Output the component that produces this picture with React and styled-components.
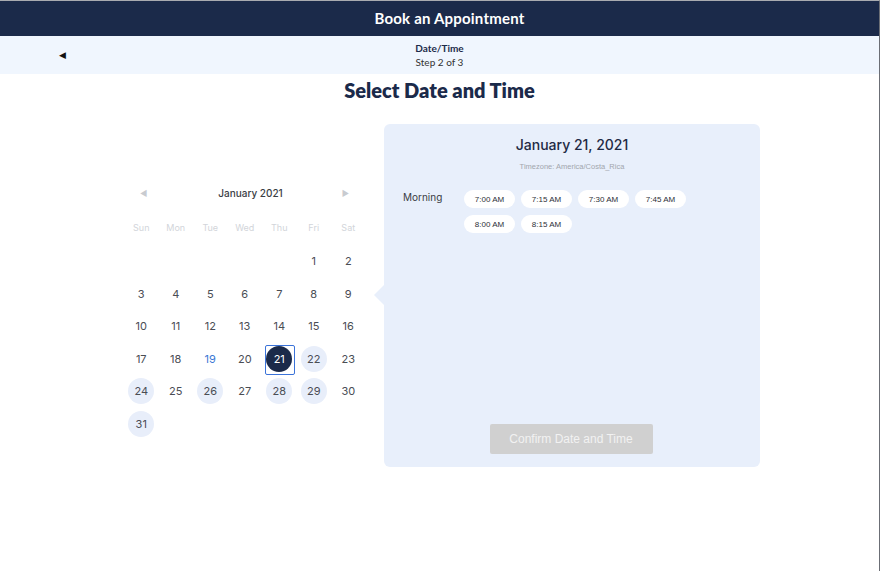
import React from "react";
import styled, { createGlobalStyle } from "styled-components";

const Global = createGlobalStyle`
  html, body { margin: 0; padding: 0; background: #fff; }
  body { font-family: "Lato", "Noto Sans", sans-serif; }
  * { box-sizing: border-box; }
`;

const Page = styled.div`
  width: 880px;
  height: 571px;
  border-top: 1px solid #a9abb0;
  border-right: 1px solid #6b6e75;
  background: #fff;
  display: flex;
  flex-direction: column;
`;

const TopBar = styled.header`
  height: 35px;
  background: #1b2a4a;
  color: #fff;
  display: flex;
  align-items: center;
  justify-content: center;
  padding: 0 0 1px 20px;
  font-family: "Lato", sans-serif;
  font-weight: 700;
  font-size: 15px;
  letter-spacing: 0.2px;
`;

const StepBar = styled.div`
  height: 38px;
  background: #f0f6fe;
  position: relative;
  display: flex;
  flex-direction: column;
  align-items: center;
  justify-content: center;
  gap: 2px;
  color: #1b2a4a;
  font-family: "Lato", sans-serif;
`;

const BackButton = styled.button`
  position: absolute;
  left: 59px;
  top: 50%;
  transform: translateY(-50%);
  background: none;
  border: none;
  padding: 0;
  font-size: 9px;
  color: #111;
  cursor: pointer;
  line-height: 1;
`;

const StepTitle = styled.div`
  font-size: 10px;
  font-weight: 700;
  line-height: 12px;
`;

const StepSub = styled.div`
  font-size: 10px;
  font-weight: 400;
  line-height: 12px;
  color: #333;
`;

const Heading = styled.h1`
  margin: 4px 0 0;
  text-align: center;
  font-family: "Lato", sans-serif;
  font-weight: 800;
  font-size: 20px;
  line-height: 24px;
  color: #1b2a4a;
`;

const Content = styled.div`
  display: flex;
  justify-content: center;
  align-items: flex-start;
  gap: 19px;
  margin-top: 22px;
  padding-left: 5px;
`;

const Calendar = styled.div`
  width: 241px;
  margin-top: 59px;
  font-family: "Inter", sans-serif;
`;

const CalHeader = styled.div`
  height: 20px;
  display: flex;
  align-items: center;
  justify-content: space-between;
  padding: 0 16px 0 16px;
`;

const NavArrow = styled.span`
  color: #c8cbd0;
  font-size: 8px;
  line-height: 1;
`;

const MonthLabel = styled.div`
  font-size: 10px;
  font-weight: 500;
  color: #3a3d44;
  margin-left: 12px;
`;

const Grid = styled.div`
  display: grid;
  grid-template-columns: repeat(7, 34.5px);
  grid-template-rows: 36px;
  grid-auto-rows: 32.5px;
  margin-top: 6px;
`;

const WeekDay = styled.div`
  display: flex;
  align-items: center;
  justify-content: center;
  font-size: 9px;
  color: #d2d5da;
  font-weight: 400;
`;

const DayCell = styled.div`
  display: flex;
  align-items: center;
  justify-content: center;
`;

const Day = styled.div`
  width: 26px;
  height: 26px;
  border-radius: 50%;
  display: flex;
  align-items: center;
  justify-content: center;
  font-size: 11px;
  position: relative;
  color: ${(p) => (p.$selected ? "#fff" : p.$today ? "#3a78d4" : "#4a4d54")};
  background: ${(p) =>
    p.$selected ? "#1b2a4a" : p.$available ? "#e8eefa" : "transparent"};
  ${(p) =>
    p.$selected &&
    `
    &::after {
      content: "";
      position: absolute;
      left: -1px;
      top: -1px;
      width: 28px;
      height: 28px;
      border: 1.5px solid #3b73d9;
      border-radius: 2px;
    }
  `}
`;

const Panel = styled.section`
  position: relative;
  width: 376px;
  height: 343px;
  background: #e8effb;
  border-radius: 6px;
  padding: 12px 19px 13px;
  display: flex;
  flex-direction: column;
  &::before {
    content: "";
    position: absolute;
    left: -10px;
    top: 161px;
    border-top: 10px solid transparent;
    border-bottom: 10px solid transparent;
    border-right: 10px solid #e8effb;
  }
`;

const PanelTitle = styled.h2`
  margin: 0;
  text-align: center;
  font-family: "Inter", sans-serif;
  font-weight: 500;
  font-size: 14px;
  line-height: 18px;
  color: #1f2a44;
`;

const Timezone = styled.div`
  margin-top: 8px;
  text-align: center;
  font-family: "Liberation Sans", sans-serif;
  font-size: 7.5px;
  color: #a2a6ad;
`;

const SlotRow = styled.div`
  display: flex;
  margin-top: 19px;
`;

const SlotLabel = styled.div`
  width: 61px;
  font-family: "Inter", sans-serif;
  font-size: 10px;
  color: #3a3d44;
  padding-top: 1px;
`;

const Slots = styled.div`
  width: 230px;
  display: flex;
  flex-wrap: wrap;
  column-gap: 6px;
  row-gap: 7px;
`;

const Slot = styled.button`
  width: 51px;
  height: 18px;
  border: none;
  border-radius: 9px;
  background: #fff;
  font-family: "Liberation Sans", sans-serif;
  font-size: 8px;
  color: #2d3038;
  padding: 0;
  cursor: pointer;
`;

const Confirm = styled.button`
  margin-top: auto;
  align-self: center;
  width: 163px;
  height: 30px;
  border: none;
  border-radius: 2px;
  background: #d0d0d0;
  color: #f2f2f2;
  font-family: "Liberation Sans", sans-serif;
  font-size: 12px;
  padding: 0;
  transform: translateX(-1px);
`;

const weekDays = ["Sun", "Mon", "Tue", "Wed", "Thu", "Fri", "Sat"];
const available = new Set([22, 24, 26, 28, 29, 31]);
const times = ["7:00 AM", "7:15 AM", "7:30 AM", "7:45 AM", "8:00 AM", "8:15 AM"];

export default function App() {
  const cells = [];
  for (let i = 0; i < 5; i++) cells.push(null);
  for (let d = 1; d <= 31; d++) cells.push(d);

  return (
    <>
      <Global />
      <Page>
        <TopBar>Book an Appointment</TopBar>
        <StepBar>
          <BackButton aria-label="Back">◀</BackButton>
          <StepTitle>Date/Time</StepTitle>
          <StepSub>Step 2 of 3</StepSub>
        </StepBar>
        <Heading>Select Date and Time</Heading>
        <Content>
          <Calendar>
            <CalHeader>
              <NavArrow>◀</NavArrow>
              <MonthLabel>January 2021</MonthLabel>
              <NavArrow>▶</NavArrow>
            </CalHeader>
            <Grid>
              {weekDays.map((w) => (
                <WeekDay key={w}>{w}</WeekDay>
              ))}
              {cells.map((d, i) => (
                <DayCell key={i}>
                  {d && (
                    <Day
                      $selected={d === 21}
                      $today={d === 19}
                      $available={available.has(d)}
                    >
                      {d}
                    </Day>
                  )}
                </DayCell>
              ))}
            </Grid>
          </Calendar>
          <Panel>
            <PanelTitle>January 21, 2021</PanelTitle>
            <Timezone>Timezone: America/Costa_Rica</Timezone>
            <SlotRow>
              <SlotLabel>Morning</SlotLabel>
              <Slots>
                {times.map((t) => (
                  <Slot key={t}>{t}</Slot>
                ))}
              </Slots>
            </SlotRow>
            <Confirm disabled>Confirm Date and Time</Confirm>
          </Panel>
        </Content>
      </Page>
    </>
  );
}
